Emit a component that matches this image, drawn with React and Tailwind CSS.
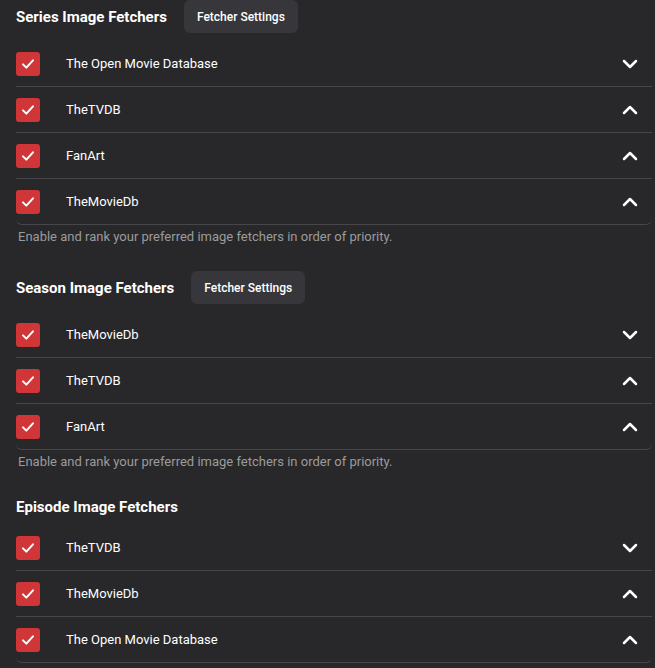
import { ChevronDown, ChevronUp } from 'lucide-react'

const SECTIONS = [
  {
    title: 'Series Image Fetchers',
    settings: true,
    items: [
      { name: 'The Open Movie Database', open: false },
      { name: 'TheTVDB', open: true },
      { name: 'FanArt', open: true },
      { name: 'TheMovieDb', open: true },
    ],
  },
  {
    title: 'Season Image Fetchers',
    settings: true,
    items: [
      { name: 'TheMovieDb', open: false },
      { name: 'TheTVDB', open: true },
      { name: 'FanArt', open: true },
    ],
  },
  {
    title: 'Episode Image Fetchers',
    settings: false,
    items: [
      { name: 'TheTVDB', open: false },
      { name: 'TheMovieDb', open: true },
      { name: 'The Open Movie Database', open: true },
    ],
    noHelp: true,
  },
]

const Check = () => (
  <div className="w-6 h-6 rounded-[3px] bg-[#d03637] flex items-center justify-center shrink-0">
    <svg width="16" height="16" viewBox="0 0 24 24" fill="none" stroke="white" strokeWidth="3" strokeLinecap="round" strokeLinejoin="round">
      <path d="M4.5 12.5l5 5L19.5 6.5" />
    </svg>
  </div>
)

const App = () => {
  return (
    <div className="min-h-screen bg-[#28282a] pl-4 pr-[3px] text-white font-['Roboto',sans-serif]">
      {SECTIONS.map((s, si) => (
        <div key={s.title} className={si > 0 ? 'mt-[25px]' : ''}>
          {/* Header */}
          <div className={`flex items-center ${s.settings ? 'h-[33px]' : 'h-[21px]'}`}>
            <h2 className="text-[15px] font-bold leading-5">{s.title}</h2>
            {s.settings && (
              <button className="ml-[17px] h-[33px] px-[13px] rounded-md bg-[#37363b] text-xs font-medium text-white">
                Fetcher Settings
              </button>
            )}
          </div>

          {/* Fetcher list */}
          <div className="mt-2">
            {s.items.map((item, i) => {
              const last = i === s.items.length - 1
              return (
                <div key={item.name}
                  className={`h-[46px] flex items-center border-b border-[#474749] ${last ? 'rounded-b-md' : ''}`}>
                  <Check />
                  <span className="ml-[26px] text-[13px] flex-1">{item.name}</span>
                  {item.open
                    ? <ChevronUp size={24} strokeWidth={2.5} className="mr-[10px] text-white" />
                    : <ChevronDown size={24} strokeWidth={2.5} className="mr-[10px] text-white" />}
                </div>
              )
            })}
          </div>

          {!s.noHelp && (
            <p className="mt-[3px] pl-[2px] text-[13px] leading-[18px] text-[#9b9b9c]">
              Enable and rank your preferred image fetchers in order of priority.
            </p>
          )}
        </div>
      ))}
    </div>
  )
}

export default App
